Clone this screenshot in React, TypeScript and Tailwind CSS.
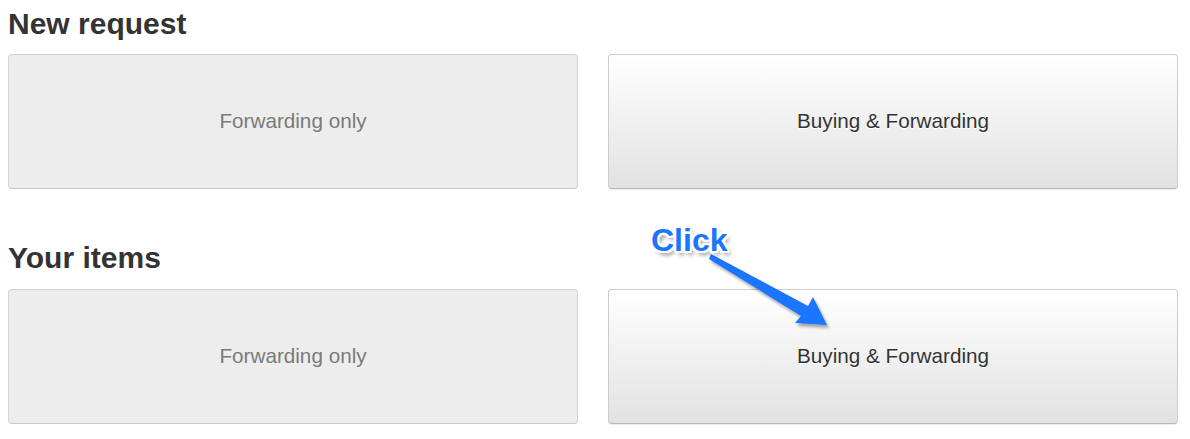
import React from "react";

function Box({ label, active }: { label: string; active?: boolean }) {
  return active ? (
    <div className="h-[135px] pb-[2px] rounded-[4px] border border-[#cccccc] border-b-[#b9b9b9] bg-[linear-gradient(to_bottom,#ffffff_0%,#e2e2e2_100%)] shadow-[0_1px_1px_rgba(0,0,0,0.075)] flex items-center justify-center text-[20.7px] text-[#333333] [text-shadow:0_1px_0_#fff]">
      {label}
    </div>
  ) : (
    <div className="h-[135px] pb-[2px] rounded-[4px] border border-[#d3d3d3] border-b-[#c8c8c8] bg-[#ededed] flex items-center justify-center text-[20.7px] text-[#7a7a7a]">
      {label}
    </div>
  );
}

export default function App() {
  return (
    <div className="relative w-[1190px] h-[439px] bg-white overflow-hidden font-['Liberation_Sans',Arial,sans-serif]">
      <div className="pl-[8px] pr-[12px]">
        <h2 className="mt-[7px] h-[33px] leading-[33px] text-[30px] font-bold text-[#333333]">New request</h2>
        <div className="mt-[14px] grid grid-cols-2 gap-[30px]">
          <Box label="Forwarding only" />
          <Box label="Buying & Forwarding" active />
        </div>
        <h2 className="mt-[52px] h-[33px] leading-[33px] text-[30px] font-bold text-[#333333]">Your items</h2>
        <div className="mt-[15px] grid grid-cols-2 gap-[30px]">
          <Box label="Forwarding only" />
          <Box label="Buying & Forwarding" active />
        </div>
      </div>

      <svg className="absolute left-0 top-0 pointer-events-none" width="1190" height="439" viewBox="0 0 1190 439">
        <defs>
          <filter id="ds" x="-20%" y="-20%" width="140%" height="140%">
            <feDropShadow dx="2" dy="3" stdDeviation="1.5" floodColor="#000" floodOpacity="0.35" />
          </filter>
        </defs>
        <polygon
          points="711,254 808,306 813,297 827,325 795,323 801,316 709,259"
          fill="#1a75ff"
          filter="url(#ds)"
        />
      </svg>
      <div className="absolute left-[651px] top-[224px] leading-[32px] text-[32px] font-bold text-[#1a75ff] [text-shadow:-2px_-2px_0_#fff,2px_-2px_0_#fff,-2px_2px_0_#fff,2px_2px_0_#fff,0_-2px_0_#fff,0_2px_0_#fff,-2px_0_0_#fff,2px_0_0_#fff,3px_4px_4px_rgba(0,0,0,0.45)]">
        Click
      </div>
    </div>
  );
}
